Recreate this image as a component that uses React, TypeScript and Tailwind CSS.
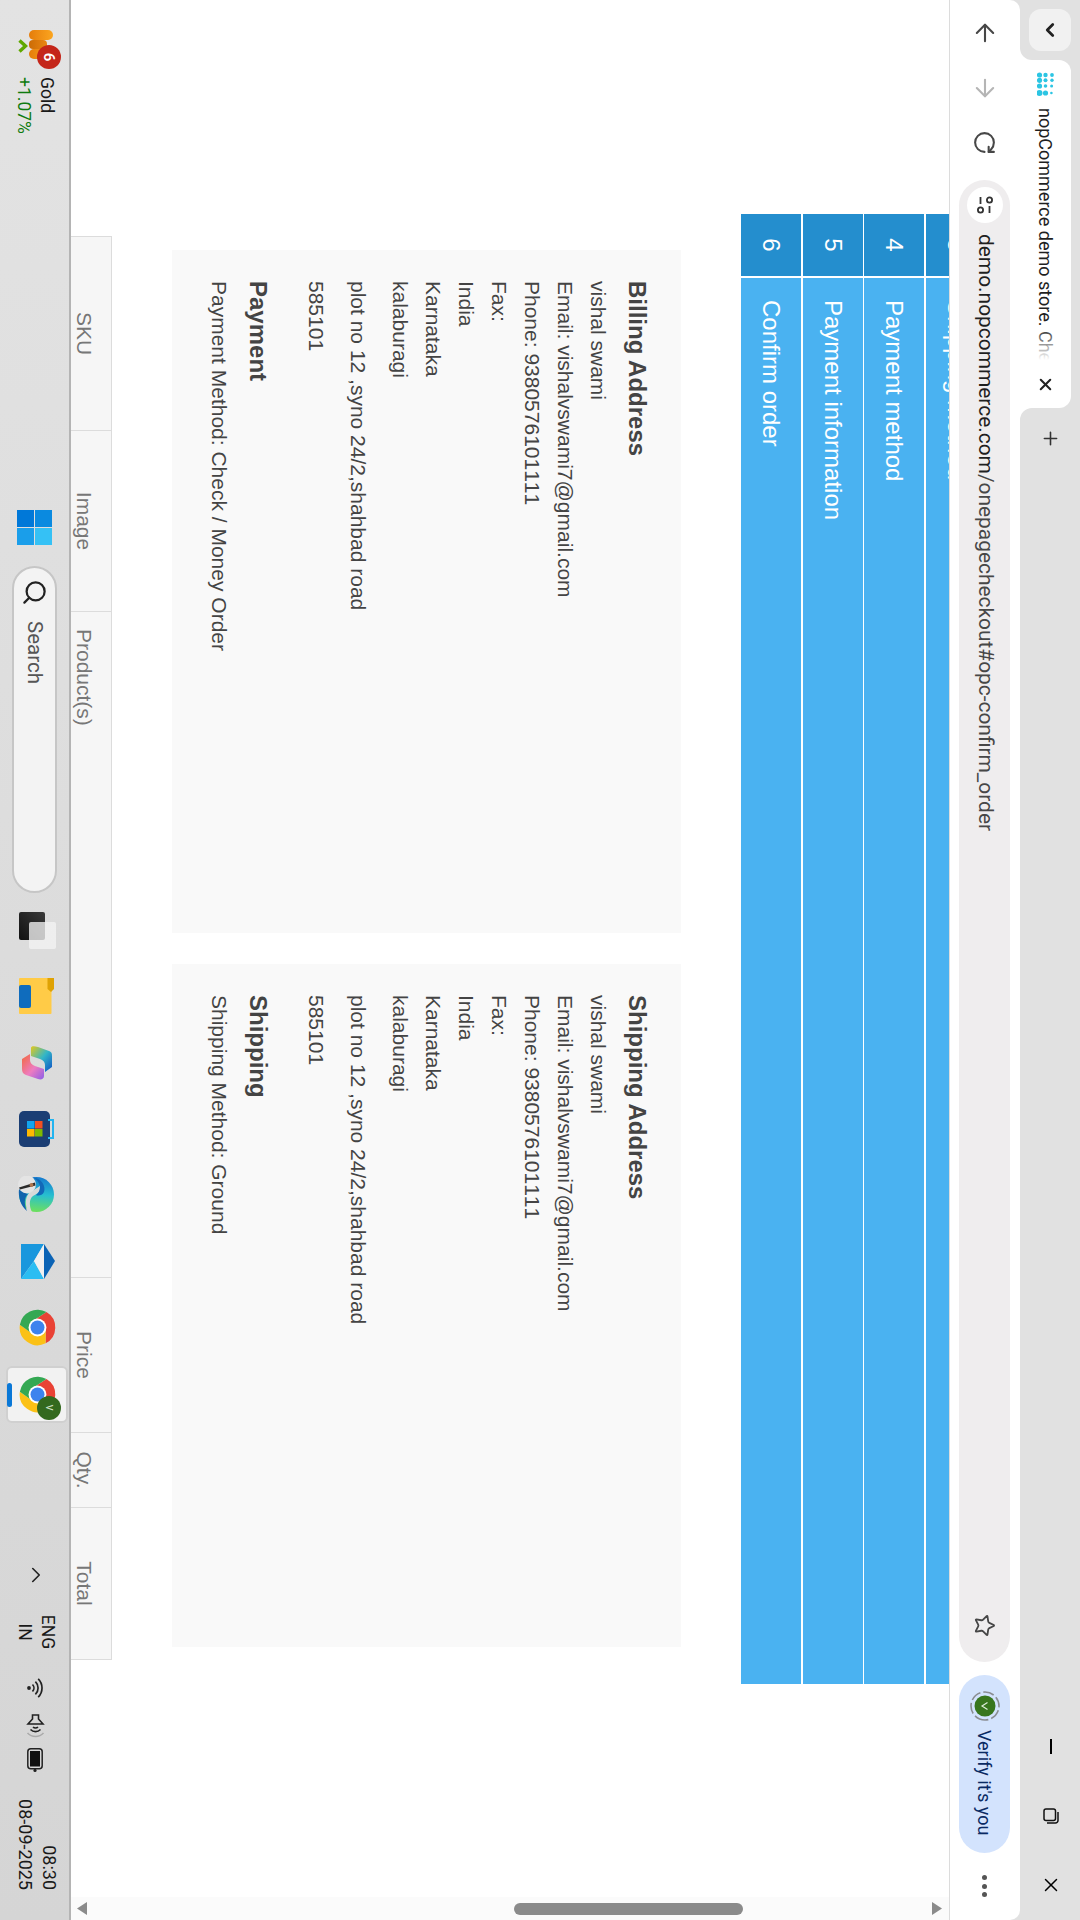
import { ArrowLeft, ArrowRight, ChevronDown, ChevronRight, Plus, RotateCw, Search, Star, X } from "lucide-react";

const ui = "font-['Roboto',sans-serif]";

const steps = [
  { no: "3", title: "Shipping method", gap: "" },
  { no: "4", title: "Payment method", gap: "mt-[2px]" },
  { no: "5", title: "Payment information", gap: "mt-[1px]" },
  { no: "6", title: "Confirm order", gap: "mt-[2px]" },
];

const columns = [
  { label: "SKU", cls: "w-[193px] justify-center" },
  { label: "Image", cls: "w-[181px] justify-center border-l" },
  { label: "Product(s)", cls: "w-[666px] pl-[17px] border-l" },
  { label: "Price", cls: "w-[155px] justify-center border-l" },
  { label: "Qty.", cls: "w-[75px] justify-center border-l" },
  { label: "Total", cls: "flex-1 justify-center border-l" },
];

function InfoCard({ title, section, method }: { title: string; section: string; method: string }) {
  const lines = ["vishal swami", "Email: vishalvswami7@gmail.com", "Phone: 9380576101111", "Fax:", "India", "Karnataka", "kalaburagi"];
  return (
    <div className="w-[683px] h-[509px] bg-[#f9f9f9] px-[31px] pt-[28px] text-[21px] leading-[33px] text-[#444]">
      <div className="text-[24px] leading-[32px] font-bold mb-[6px]">{title}</div>
      {lines.map((line) => (
        <div key={line} className={line.startsWith("Phone") ? "[font-kerning:none]" : ""}>{line}</div>
      ))}
      <div className="mt-[9px]">plot no 12 ,syno 24/2,shahbad road</div>
      <div className="mt-[9px]">585101</div>
      <div className="text-[24px] leading-[32px] font-bold mt-[26px] mb-[6px]">{section}</div>
      <div>{method}</div>
    </div>
  );
}

function ChromeIcon({ size = 39 }: { size?: number }) {
  return (
    <svg width={size} height={size} viewBox="0 0 48 48">
      <path d="M24 14H43.5A22 22 0 0 0 5 13L15.34 29A10 10 0 0 1 24 14Z" fill="#e94235" />
      <path d="M24 14H43.5A22 22 0 0 1 20.5 45.7L32.66 29A10 10 0 0 0 24 14Z" fill="#fbc116" />
      <path d="M5 13A22 22 0 0 0 20.5 45.7L32.66 29A10 10 0 0 1 15.34 29Z" fill="#34a853" />
      <circle cx="24" cy="24" r="11" fill="#fff" />
      <circle cx="24" cy="24" r="8.6" fill="#3d83ee" />
    </svg>
  );
}

function WinLogo() {
  return (
    <div className="grid grid-cols-2 gap-[1px] w-[35px] h-[35px] shrink-0">
      <div className="bg-[#0a8ae0]" />
      <div className="bg-[#35c1f5]" />
      <div className="bg-[#0078d8]" />
      <div className="bg-[#1a9eea]" />
    </div>
  );
}

function TaskView() {
  return (
    <svg width="37" height="37" viewBox="0 0 37 37">
      <defs>
        <linearGradient id="tv" x1="0" y1="0" x2="1" y2="1">
          <stop offset="0" stopColor="#3a3a3a" />
          <stop offset="1" stopColor="#111" />
        </linearGradient>
      </defs>
      <rect x="0" y="11" width="28" height="26" rx="2" fill="url(#tv)" />
      <rect x="10" y="0" width="27" height="27" rx="2" fill="#f4f4f4" fillOpacity="0.78" />
    </svg>
  );
}

// taskbar icons below are traced upright on the rotated shot, so they turn by -90
function FolderIcon() {
  return (
    <svg width="36" height="36" viewBox="0 0 36 36">
      <g transform="rotate(-90 18 18)">
        <rect x="0" y="0" width="32.5" height="36" rx="1" fill="#ffcb47" />
        <rect x="0" y="7" width="12" height="23" rx="2" fill="#0f6cbd" />
        <path d="M28.5 0H35V11L32 14L28.5 11Z" fill="#dfa204" />
      </g>
    </svg>
  );
}

function CopilotIcon() {
  return (
    <svg width="36" height="36" viewBox="0 0 36 36">
      <defs>
        <linearGradient id="cpa" x1="0" y1="0" x2="1" y2="1">
          <stop offset="0" stopColor="#e3c81c" />
          <stop offset="0.5" stopColor="#32b6c8" />
          <stop offset="1" stopColor="#0f4fc4" />
        </linearGradient>
        <linearGradient id="cpb" x1="0" y1="0" x2="1" y2="1">
          <stop offset="0" stopColor="#f2683a" />
          <stop offset="0.55" stopColor="#ee7cc0" />
          <stop offset="1" stopColor="#8d5ee8" />
        </linearGradient>
      </defs>
      <g transform="rotate(-90 18 18)">
        <path d="M3 14L11 9V15C11 18 13 20 16 21L25 24V31C25 34 22 35 19 34L7 30C4 29 3 27 3 24Z" fill="url(#cpb)" />
        <path d="M12 3C12 1 15 1 19 2L30 6C33 7 33 9 33 11V22L26 27V20C26 17 24 15 21 14L12 11Z" fill="url(#cpa)" />
      </g>
    </svg>
  );
}

function StoreIcon() {
  return (
    <svg width="36" height="36" viewBox="0 0 36 36">
      <g transform="rotate(-90 18 18)">
        <rect x="0" y="0" width="31" height="36" rx="5" fill="#1b3e74" />
        <rect x="8" y="10" width="7.5" height="7.5" fill="#12a5ee" />
        <rect x="16" y="10" width="7.5" height="7.5" fill="#f25022" />
        <rect x="8" y="18" width="7.5" height="7.5" fill="#ffb900" />
        <rect x="16" y="18" width="7.5" height="7.5" fill="#7fba00" />
        <path d="M29 9H34V27H29" fill="none" stroke="#22b4f0" strokeWidth="2" />
      </g>
    </svg>
  );
}

function EdgeIcon() {
  return (
    <svg width="38" height="38" viewBox="0 0 38 38">
      <defs>
        <linearGradient id="eg" x1="0.6" y1="0" x2="0.5" y2="1">
          <stop offset="0" stopColor="#1579cf" />
          <stop offset="0.5" stopColor="#27bfd0" />
          <stop offset="1" stopColor="#6ee05c" />
        </linearGradient>
      </defs>
      <g transform="rotate(-90 19 19)">
        <circle cx="18.5" cy="18.5" r="17.5" fill="url(#eg)" />
        <path d="M1 13C0 22 3 30 9 35C6 28 6 22 10 18Z" fill="#1264ad" />
        <path d="M10 36C7 29 7 22 11 17L22 10C24 15 20 17 15 20C11 23 11 30 14 36Z" fill="#d9d9d9" />
        <path d="M15 1C24 3 28 10 26 16C24 20 20 20 18 19C21 17 22 13 22 10C21 6 18 3 15 1Z" fill="#1269b8" />
        <circle cx="9" cy="8.5" r="9" fill="#e4e4e4" />
        <path d="M1 11.5L17 6.5L17.5 9.5L2 13.5Z" fill="#2a2a2a" />
        <circle cx="13.5" cy="9" r="2" fill="#b0764e" />
      </g>
    </svg>
  );
}

function KiteIcon() {
  return (
    <svg width="37" height="37" viewBox="0 0 37 37">
      <g transform="rotate(-90 18.5 18.5)">
        <path d="M2 1H25L15 18L2 36Z" fill="#1997dd" />
        <path d="M2 36L15 18L25 36Z" fill="#2bbdf2" />
        <path d="M25 1L15 18L25 36Z" fill="#f0f0f0" />
        <path d="M25 1L36 18L25 36Z" fill="#0b63b5" />
      </g>
    </svg>
  );
}

function GoldWidget() {
  return (
    <div className="flex items-center w-[492px] pl-[12px] -mt-[2px]">
      <div className="relative w-[28px] h-[46px] flex flex-col items-center">
        <div className="flex h-[24px] mt-[5px]">
          <div className="w-[10px] rounded-[5px] bg-linear-to-b from-[#fba51f] to-[#e57d0a]" />
          <div className="w-[9px] rounded-[4px] mt-[6px] bg-linear-to-b from-[#e98612] to-[#cc6c06]" />
          <div className="w-[10px] rounded-[5px] bg-linear-to-b from-[#fba51f] to-[#e57d0a]" />
        </div>
        <svg width="14" height="10" viewBox="0 0 14 10" className="mt-[1px] ml-[4px] shrink-0">
          <path d="M1.5 8.5L7 2.5L12.5 8.5" fill="none" stroke="#5fa800" strokeWidth="3.4" />
        </svg>
        <div className="absolute left-[15px] -top-[3px] w-[24px] h-[24px] rounded-full bg-[#c4261a] text-white text-[15px] leading-[24px] text-center font-semibold">6</div>
      </div>
      <div className="ml-[19px] text-[17.5px] leading-[23px]">
        <div className="text-[#1a1a1a]">Gold</div>
        <div className="text-[#0f7b0f]">+1.07%</div>
      </div>
    </div>
  );
}

function TrayIcons() {
  return (
    <>
      <div className="w-[38px] flex justify-center -mt-[2px]">
        <svg width="26" height="19" viewBox="0 0 26 19" fill="none" stroke="#222" strokeWidth="1.7">
          <circle cx="13" cy="16" r="1.9" fill="#222" stroke="none" />
          <path d="M9.5 12.5A5 5 0 0 1 16.5 12.5" />
          <path d="M6.6 9.6A9 9 0 0 1 19.4 9.6" />
          <path d="M3.8 6.8A13 13 0 0 1 22.2 6.8" />
        </svg>
      </div>
      <div className="w-[36px] flex justify-center -mt-[2px]">
        <svg width="25" height="21" viewBox="0 0 25 21" fill="none" stroke="#222" strokeWidth="1.6">
          <path d="M2 7.5H6L11 3V18L6 13.5H2Z" />
          <path d="M14 8A3.5 3.5 0 0 1 14 13" />
          <path d="M16.5 5.5A7 7 0 0 1 16.5 15.5" />
          <path d="M20 2.5A11 11 0 0 1 20 18.5" stroke="#aaa" />
        </svg>
      </div>
      <div className="w-[34px] flex justify-center -mt-[2px]">
        <svg width="24" height="16" viewBox="0 0 24 16">
          <rect x="0.8" y="0.8" width="20" height="14.4" rx="3" fill="none" stroke="#222" strokeWidth="1.5" />
          <rect x="3" y="3" width="15.5" height="10" fill="#111" />
          <circle cx="22.4" cy="8" r="1.6" fill="#222" />
        </svg>
      </div>
    </>
  );
}

function Taskbar() {
  const slot = "w-[66.3px] flex justify-center -mt-[6px]";
  return (
    <div className={`h-[71px] shrink-0 border-t-2 border-[#b4b4b4] bg-linear-to-r from-[#e3e3e3] to-[#d5d5d5] flex items-center pl-[18px] pr-[30px] ${ui}`}>
      <GoldWidget />
      <WinLogo />
      <div className="ml-[21px] w-[327px] h-[45px] shrink-0 rounded-full bg-[#f3f3f3] border-2 border-[#c6c6c6] flex items-center pl-[11px] mr-[4px]">
        <Search size={27} strokeWidth={2} className="text-[#222]" />
        <span className="ml-[15px] text-[20.5px] text-[#555]">Search</span>
      </div>
      <div className={slot}><TaskView /></div>
      <div className={slot}><FolderIcon /></div>
      <div className={slot}><CopilotIcon /></div>
      <div className={slot}><StoreIcon /></div>
      <div className={slot}><EdgeIcon /></div>
      <div className={slot}><KiteIcon /></div>
      <div className={slot}><ChromeIcon /></div>
      <div className={slot}>
        <div className="relative w-[57px] h-[62px] rounded-[6px] bg-[#f2f2f2] border-2 border-[#d0d0d0] flex items-center justify-center">
          <ChromeIcon />
          <div className="absolute left-[28px] top-[5px] w-[24px] h-[24px] rounded-full bg-[#33691e] text-[#cfe0c4] text-[13px] leading-[22px] text-center">v</div>
          <div className="absolute left-[15px] bottom-[-1px] w-[24px] h-[5px] rounded-full bg-[#0a78d7]" />
        </div>
      </div>
      <div className="ml-auto flex items-center">
        <div className="w-[40px] flex justify-center -mt-[4px]">
          <ChevronRight size={26} strokeWidth={1.5} className="text-[#222] -rotate-90" />
        </div>
        <div className="w-[74px] text-center text-[17.5px] leading-[23px] text-[#1a1a1a] -mt-[4px]">
          <div>ENG</div>
          <div>IN</div>
        </div>
        <TrayIcons />
        <div className="w-[113px] text-right text-[18px] leading-[24px] text-[#1a1a1a] -mt-[6px]">
          <div>08:30</div>
          <div>08-09-2025</div>
        </div>
      </div>
    </div>
  );
}

function TabStrip() {
  return (
    <div className={`h-[60px] shrink-0 flex pl-[9px] ${ui}`}>
      <div className="mt-[9px] w-[42px] h-[42px] rounded-[12px] bg-[#f1f1f1] flex items-center justify-center">
        <ChevronDown size={22} strokeWidth={3} className="text-[#222]" />
      </div>
      <div className="relative ml-[9px] mt-[9px] w-[348px] h-[51px] rounded-t-[12px] bg-white flex items-center pl-[12px] pr-[14px] z-10">
        <div className="absolute -left-[12px] bottom-0 w-[12px] h-[12px] bg-white">
          <div className="w-full h-full rounded-br-[12px] bg-[#e1e1e1]" />
        </div>
        <div className="absolute -right-[12px] bottom-0 w-[12px] h-[12px] bg-white">
          <div className="w-full h-full rounded-bl-[12px] bg-[#e1e1e1]" />
        </div>
        <svg width="24" height="18" viewBox="0 0 24 18" className="shrink-0 -mt-[1px]">
          <g fill="#2cc5e3">
            <circle cx="3" cy="3" r="1.9" />
            <circle cx="8.3" cy="3" r="1.7" />
            <circle cx="14" cy="3.4" r="1.5" />
            <circle cx="3" cy="9.5" r="2.2" />
            <circle cx="8.3" cy="9.5" r="2" />
            <circle cx="14" cy="9.5" r="1.8" />
            <circle cx="21" cy="9.5" r="2.6" />
            <circle cx="3" cy="15.5" r="2.6" />
            <circle cx="8.3" cy="15.5" r="2.6" />
            <circle cx="14" cy="15.5" r="2.6" />
            <circle cx="21" cy="15.5" r="3" />
            <circle cx="21" cy="3.6" r="1.3" />
          </g>
        </svg>
        <div className="relative ml-[12px] w-[252px] overflow-hidden whitespace-nowrap text-[18px] text-[#1f1f1f]">
          nopCommerce demo store. Checkout
          <div className="absolute right-0 top-0 h-full w-[34px] bg-linear-to-r from-transparent to-white" />
        </div>
        <X size={19} strokeWidth={2.6} className="ml-auto text-[#222]" />
      </div>
      <div className="relative w-[60px] h-[58px] ml-0 flex items-center justify-center">
        <Plus size={21} strokeWidth={1.8} className="text-[#333]" />
      </div>
      <div className="ml-auto flex pr-[1px] h-[58px] text-black">
        <div className="w-[69px] flex items-center justify-center">
          <div className="w-[15px] h-[2px] bg-black" />
        </div>
        <div className="w-[69px] flex items-center justify-center">
          <svg width="16" height="16" viewBox="0 0 16 16" fill="none" stroke="#111" strokeWidth="1.5">
            <rect x="1" y="3.5" width="11.5" height="11.5" rx="2" />
            <path d="M4 1H12.5A2.5 2.5 0 0 1 15 3.5V12" />
          </svg>
        </div>
        <div className="w-[69px] flex items-center justify-center">
          <X size={22} strokeWidth={1.6} className="text-black" />
        </div>
      </div>
    </div>
  );
}

function Toolbar() {
  return (
    <div className={`h-[70px] shrink-0 rounded-t-[10px] bg-white flex items-center pl-[5px] ${ui}`}>
      <div className="w-[55px] flex justify-center">
        <ArrowLeft size={28} strokeWidth={1.8} className="text-[#474747]" />
      </div>
      <div className="w-[55px] flex justify-center">
        <ArrowRight size={28} strokeWidth={1.8} className="text-[#b5b5b5]" />
      </div>
      <div className="w-[55px] flex justify-center">
        <RotateCw size={25} strokeWidth={2} className="text-[#474747]" />
      </div>
      <div className="ml-[10px] w-[1482px] h-[51px] rounded-full bg-[#efedee] flex items-center pl-[7px] pr-[25px]">
        <div className="w-[36px] h-[36px] rounded-full bg-white flex items-center justify-center">
          <svg width="20" height="18" viewBox="0 0 20 18" fill="none" stroke="#333" strokeWidth="1.8">
            <circle cx="5" cy="4.5" r="2.6" />
            <path d="M11 4.5H18" />
            <path d="M2 13.5H9" />
            <circle cx="15" cy="13.5" r="2.6" />
          </svg>
        </div>
        <div className="ml-[11px] text-[20.9px] whitespace-nowrap">
          <span className="text-[#1f1f1f]">demo.nopcommerce.com</span>
          <span className="text-[#474747]">/onepagecheckout#opc-confirm_order</span>
        </div>
        <Star size={23} strokeWidth={1.9} className="ml-auto text-[#474747]" />
      </div>
      <div className="ml-[13px] w-[178px] h-[51px] rounded-full bg-[#d3e3fd] flex items-center pl-[16px]">
        <svg width="30" height="30" viewBox="0 0 30 30" className="shrink-0">
          <circle cx="15" cy="15" r="14" fill="none" stroke="#8a8d92" strokeWidth="1.6" strokeDasharray="11 3" />
          <circle cx="15" cy="15" r="10.5" fill="#38761d" />
          <path d="M11.5 12.5L15 18L18.5 12.5" fill="none" stroke="#dfeeda" strokeWidth="1.2" />
        </svg>
        <span className="ml-[9px] text-[18px] text-[#0a2a63] whitespace-nowrap">Verify it's you</span>
      </div>
      <div className="flex-1 flex justify-center gap-[3.5px] pr-[1px]">
        <div className="w-[5px] h-[5px] rounded-full bg-[#555]" />
        <div className="w-[5px] h-[5px] rounded-full bg-[#555]" />
        <div className="w-[5px] h-[5px] rounded-full bg-[#555]" />
      </div>
    </div>
  );
}

function Scrollbar() {
  return (
    <div className="w-[23px] shrink-0 bg-[#fbfbfb] flex flex-col items-center pt-[7px] pb-[6px]">
      <svg width="13" height="10" viewBox="0 0 13 10"><path d="M6.5 0L13 10H0Z" fill="#8b8b8b" /></svg>
      <div className="mt-[189px] w-[12px] h-[229px] rounded-full bg-[#8b8b8b]" />
      <svg width="13" height="10" viewBox="0 0 13 10" className="mt-auto"><path d="M0 0H13L6.5 10Z" fill="#8b8b8b" /></svg>
    </div>
  );
}

export default function App() {
  return (
    <div className="w-[1080px] h-[1920px] overflow-hidden">
      <div className="w-[1920px] h-[1080px] origin-top-left translate-x-[1080px] rotate-90 bg-[#e1e1e1] flex flex-col overflow-hidden">
        <TabStrip />
        <Toolbar />
        <div className="flex-1 min-h-0 flex border-t border-[#dcdcdc] bg-white overflow-hidden">
          <div className="flex-1 min-w-0 overflow-hidden font-['Liberation_Sans',sans-serif]">
            <div className="-mt-[37px] ml-[214px] w-[1470px]">
              {steps.map((step) => (
                <div key={step.no} className={`h-[60px] flex text-white text-[24px] ${step.gap}`}>
                  <div className="w-[62px] bg-[#248ece] flex items-center justify-center">{step.no}</div>
                  <div className="ml-[2px] flex-1 bg-[#4ab2f1] flex items-center pl-[22px]">{step.title}</div>
                </div>
              ))}
            </div>
            <div className="mt-[60px] ml-[250px] flex gap-[31px]">
              <InfoCard title="Billing Address" section="Payment" method="Payment Method: Check / Money Order" />
              <InfoCard title="Shipping Address" section="Shipping" method="Shipping Method: Ground" />
            </div>
            <div className="mt-[60px] ml-[236px] w-[1424px] h-[60px] flex bg-[#f6f6f6] border border-[#dcdcdc] text-[21px] leading-[24px] text-[#777]">
              {columns.map((col) => (
                <div key={col.label} className={`flex pt-[15px] border-[#dcdcdc] ${col.cls}`}>{col.label}</div>
              ))}
            </div>
          </div>
          <Scrollbar />
        </div>
        <Taskbar />
      </div>
    </div>
  );
}
